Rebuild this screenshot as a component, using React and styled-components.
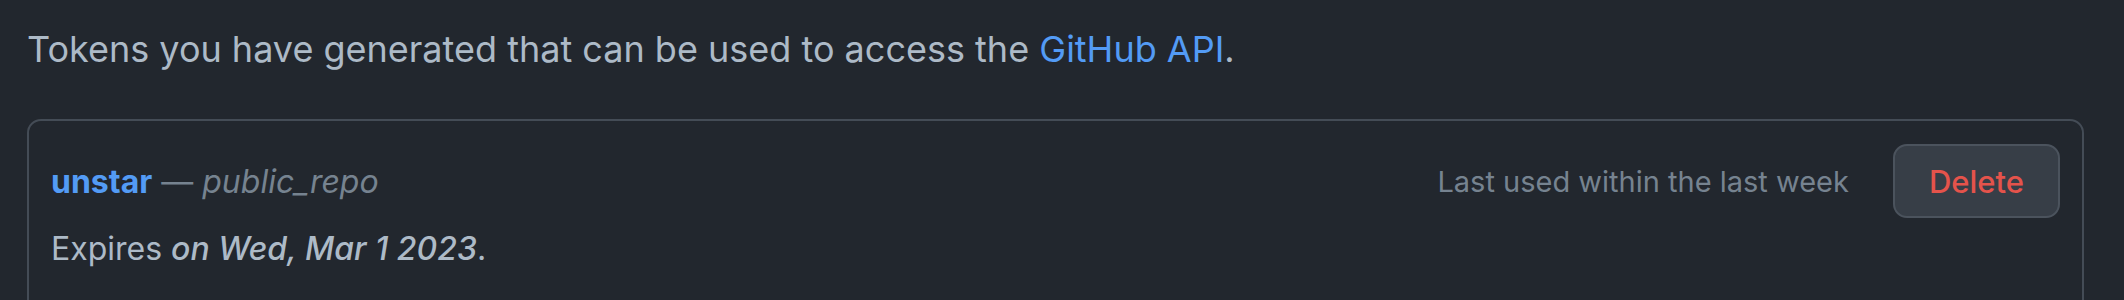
import styled, { createGlobalStyle } from 'styled-components'

const colors = {
  canvas: '#22272e',
  text: '#adbac7',
  muted: '#768390',
  link: '#539bf5',
  border: '#444c56',
  btnBg: '#373e47',
  btnBorder: '#4b535d',
  danger: '#e5534b',
}

const GlobalStyle = createGlobalStyle`
  html, body {
    margin: 0;
    background: ${colors.canvas};
  }
  body {
    font-family: Inter, "Noto Sans", sans-serif;
    color: ${colors.text};
    -webkit-font-smoothing: antialiased;
  }
`

const App = () => {
  return (
    <>
      <GlobalStyle />
      <Page>
        <Intro>
          Tokens you have generated that can be used to access the <Link href="#">GitHub API</Link>.
        </Intro>
        <TokenList>
          <TokenRow>
            <TokenHead>
              <TokenTitle>
                <TokenName href="#">unstar</TokenName>
                <Scope> — <em>public_repo</em></Scope>
              </TokenTitle>
              <Actions>
                <LastUsed>Last used within the last week</LastUsed>
                <DeleteButton type="button">Delete</DeleteButton>
              </Actions>
            </TokenHead>
            <Expires>
              Expires <em>on Wed, Mar 1 2023</em>.
            </Expires>
          </TokenRow>
        </TokenList>
      </Page>
    </>
  )
}

const Page = styled.div`
  padding: 21px 40px 0 27px;
`

const Intro = styled.p`
  margin: 0;
  font-size: 36px;
  line-height: 56px;
  color: ${colors.text};
`

const Link = styled.a`
  color: ${colors.link};
  text-decoration: none;
`

const TokenList = styled.div`
  margin-top: 42px;
  border: 2px solid ${colors.border};
  border-radius: 14px;
  min-height: 240px;
`

const TokenRow = styled.div`
  padding: 23px 22px 23px 22px;
`

const TokenHead = styled.div`
  display: flex;
  align-items: center;
  justify-content: space-between;
`

const TokenTitle = styled.div`
  font-size: 32px;
`

const TokenName = styled.a`
  color: ${colors.link};
  font-weight: 700;
  text-decoration: none;
`

const Scope = styled.span`
  color: ${colors.muted};

  em {
    font-style: italic;
  }
`

const Actions = styled.div`
  display: flex;
  align-items: center;
  gap: 44px;
`

const LastUsed = styled.span`
  font-size: 29px;
  color: ${colors.muted};
`

const DeleteButton = styled.button`
  height: 74px;
  padding: 0 34px;
  font-family: inherit;
  font-size: 31px;
  font-weight: 500;
  color: ${colors.danger};
  background: ${colors.btnBg};
  border: 2px solid ${colors.btnBorder};
  border-radius: 14px;
  cursor: pointer;
`

const Expires = styled.p`
  margin: 8px 0 0;
  font-size: 32px;
  line-height: 46px;
  color: ${colors.text};

  em {
    font-style: italic;
    font-weight: 500;
  }
`

export default App
